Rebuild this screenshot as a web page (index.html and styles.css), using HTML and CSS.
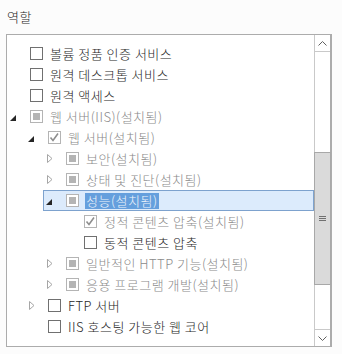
FILE: index.html
```html
<!DOCTYPE html>
<html>
<head>
  <title>역할</title>
  <link rel="stylesheet" href="styles.css">
</head>
<body>
  <div class="title">역할</div>
  <div class="roles">
    <div class="tree">
      <div class="row l0"><span class="exp"></span><span class="cb"></span><span class="label">볼륨 정품 인증 서비스</span></div>
      <div class="row l0"><span class="exp"></span><span class="cb"></span><span class="label">원격 데스크톱 서비스</span></div>
      <div class="row l0"><span class="exp"></span><span class="cb"></span><span class="label">원격 액세스</span></div>
      <div class="row l0 installed"><span class="exp open"><svg width="6" height="6"><polygon points="0,6 6,6 6,0" /></svg></span><span class="cb part"></span><span class="label">웹 서버(IIS)(설치됨)</span></div>
      <div class="row l1 installed"><span class="exp open"><svg width="6" height="6"><polygon points="0,6 6,6 6,0" /></svg></span><span class="cb check"><svg width="11" height="11"><polyline points="1.5,5.5 4,8.5 9,1.5" /></svg></span><span class="label">웹 서버(설치됨)</span></div>
      <div class="row l2 installed"><span class="exp shut"><svg width="6" height="9"><polygon points="0.5,0.5 5,4.5 0.5,8.5" /></svg></span><span class="cb part"></span><span class="label">보안(설치됨)</span></div>
      <div class="row l2 installed"><span class="exp shut"><svg width="6" height="9"><polygon points="0.5,0.5 5,4.5 0.5,8.5" /></svg></span><span class="cb part"></span><span class="label">상태 및 진단(설치됨)</span></div>
      <div class="row l2 installed selected"><span class="exp open"><svg width="6" height="6"><polygon points="0,6 6,6 6,0" /></svg></span><span class="cb part"></span><span class="label">성능(설치됨)</span></div>
      <div class="row l3 installed"><span class="exp"></span><span class="cb check"><svg width="11" height="11"><polyline points="1.5,5.5 4,8.5 9,1.5" /></svg></span><span class="label">정적 콘텐츠 압축(설치됨)</span></div>
      <div class="row l3"><span class="exp"></span><span class="cb"></span><span class="label">동적 콘텐츠 압축</span></div>
      <div class="row l2 installed"><span class="exp shut"><svg width="6" height="9"><polygon points="0.5,0.5 5,4.5 0.5,8.5" /></svg></span><span class="cb part"></span><span class="label">일반적인 HTTP 기능(설치됨)</span></div>
      <div class="row l2 installed"><span class="exp shut"><svg width="6" height="9"><polygon points="0.5,0.5 5,4.5 0.5,8.5" /></svg></span><span class="cb part"></span><span class="label">응용 프로그램 개발(설치됨)</span></div>
      <div class="row l1"><span class="exp shut"><svg width="6" height="9"><polygon points="0.5,0.5 5,4.5 0.5,8.5" /></svg></span><span class="cb"></span><span class="label">FTP 서버</span></div>
      <div class="row l1"><span class="exp"></span><span class="cb"></span><span class="label">IIS 호스팅 가능한 웹 코어</span></div>
    </div>
    <div class="scrollbar">
      <div class="arrow up"><svg width="9" height="5"><polyline points="0.5,4.5 4.5,0.5 8.5,4.5" /></svg></div>
      <div class="track">
        <div class="thumb"><svg width="7" height="5"><line x1="0" y1="0.5" x2="7" y2="0.5" /><line x1="0" y1="2.5" x2="7" y2="2.5" /><line x1="0" y1="4.5" x2="7" y2="4.5" /></svg></div>
      </div>
      <div class="arrow down"><svg width="9" height="5"><polyline points="0.5,0.5 4.5,4.5 8.5,0.5" /></svg></div>
    </div>
  </div>
</body>
</html>
```

FILE: styles.css
```css
body {
  margin: 0;
  background-color: #fcfcfc;
  font-family: "Noto Sans CJK KR", "Noto Sans", sans-serif;
  font-size: 13px;
  font-weight: 300;
  letter-spacing: 0.5px;
  color: #1e1e1e;
}
.title {
  height: 25px;
  padding: 9px 0 0 7px;
  line-height: 16px;
}
.roles {
  display: flex;
  width: 326px;
  height: 313px;
  box-sizing: border-box;
  margin-left: 6px;
  border: 1px solid #acacac;
  background-color: #ffffff;
}
.tree {
  flex: 1;
  padding-top: 8px;
}
.row {
  display: flex;
  align-items: center;
  height: 21px;
  white-space: nowrap;
}
.l1 { margin-left: 18px; }
.l2 { margin-left: 36px; }
.l3 { margin-left: 54px; }
.exp {
  display: flex;
  width: 23px;
  flex: none;
}
.exp.open svg {
  margin: 3px 0 0 3px;
  fill: #262626;
}
.exp.shut svg {
  margin-left: 4px;
  fill: #ffffff;
  stroke: #a6a6a6;
  stroke-width: 1;
}
.cb {
  position: relative;
  width: 13px;
  height: 13px;
  flex: none;
  box-sizing: border-box;
  border: 1px solid #707070;
  background-color: #ffffff;
  margin-right: 7px;
}
.cb.part,
.cb.check {
  border-color: #b4b4b4;
}
.cb.part::after {
  content: "";
  position: absolute;
  top: 2px;
  left: 2px;
  width: 7px;
  height: 7px;
  background-color: #b4b4b4;
}
.cb.check svg {
  display: block;
  fill: none;
  stroke: #8e8e8e;
  stroke-width: 1.6;
}
.label {
  line-height: 16px;
}
.installed .label {
  color: #8a8a8a;
}
.selected {
  background-color: #dcebfc;
  box-shadow: inset 0 0 0 1px #7da2ce;
}
.selected .label {
  background-color: #659fdd;
  color: #eef4fb;
  padding: 0 1px;
  margin-left: -1px;
}
.scrollbar {
  display: flex;
  flex-direction: column;
  width: 17px;
  box-sizing: border-box;
  border-left: 1px solid #c9c9c9;
  border-right: 1px solid #acacac;
}
.arrow {
  display: flex;
  align-items: center;
  justify-content: center;
  height: 16px;
}
.arrow svg {
  fill: none;
  stroke: #606060;
  stroke-width: 1;
}
.arrow.up {
  border-bottom: 1px solid #c9c9c9;
}
.arrow.down {
  border-top: 1px solid #c9c9c9;
}
.track {
  flex: 1;
}
.thumb {
  display: flex;
  align-items: center;
  justify-content: center;
  height: 133px;
  margin: 100px -1px 0;
  box-sizing: border-box;
  border: 1px solid #a8a8a8;
  background-color: #dadada;
}
.thumb svg {
  stroke: #707070;
  stroke-width: 1;
}
```
